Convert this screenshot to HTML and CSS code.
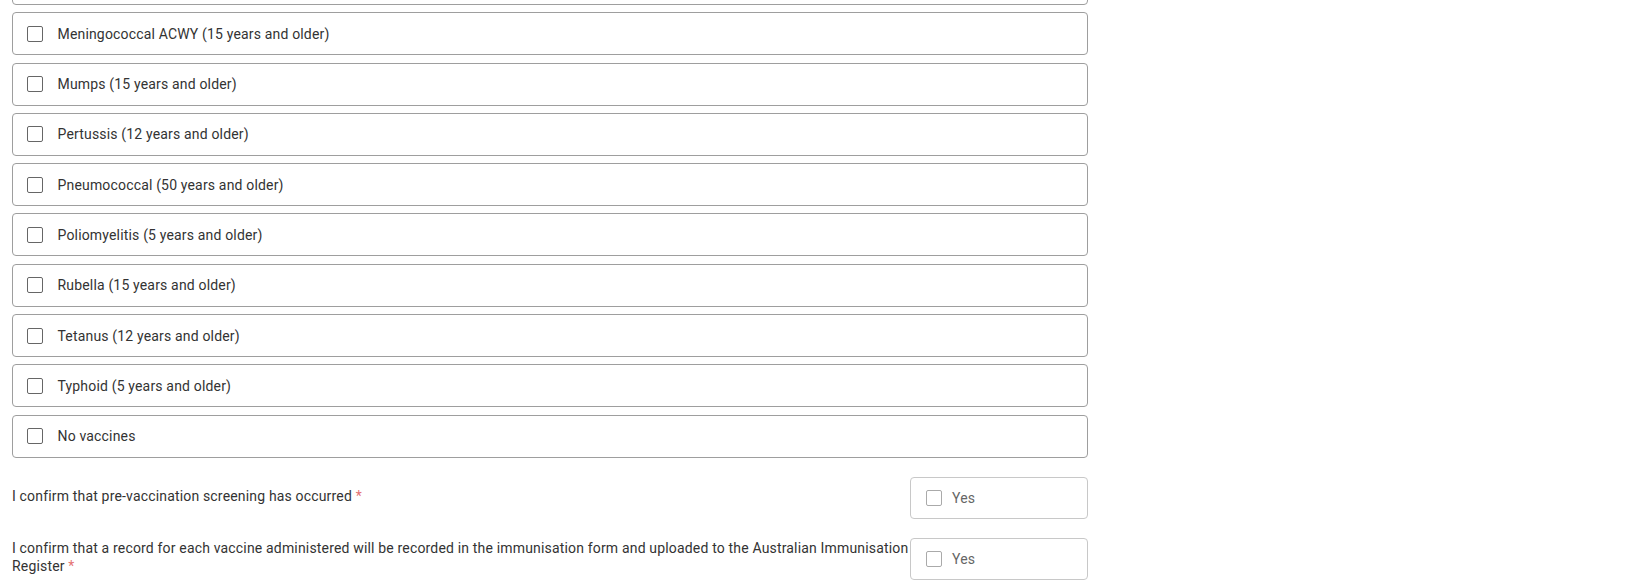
FILE: index.html
```html
<!DOCTYPE html>
<html lang="en">
<head>
    <meta charset="UTF-8">
    <title>Vaccines</title>
    <link rel="stylesheet" href="styles.css">
</head>
<body>
    <div class="form">
        <!-- vaccine options -->
        <div class="options">
            <label class="option first"><span class="box"></span>Measles (15 years and older)</label>
            <label class="option"><span class="box"></span>Meningococcal ACWY (15 years and older)</label>
            <label class="option"><span class="box"></span>Mumps (15 years and older)</label>
            <label class="option"><span class="box"></span>Pertussis (12 years and older)</label>
            <label class="option"><span class="box"></span>Pneumococcal (50 years and older)</label>
            <label class="option"><span class="box"></span>Poliomyelitis (5 years and older)</label>
            <label class="option"><span class="box"></span>Rubella (15 years and older)</label>
            <label class="option"><span class="box"></span>Tetanus (12 years and older)</label>
            <label class="option"><span class="box"></span>Typhoid (5 years and older)</label>
            <label class="option"><span class="box"></span>No vaccines</label>
        </div>

        <!-- confirmations -->
        <div class="confirm">
            <div class="confirm-label">I confirm that pre-vaccination screening has occurred <span class="req">*</span></div>
            <label class="yes"><span class="box"></span>Yes</label>
        </div>
        <div class="confirm second">
            <div class="confirm-label">I confirm that a record for each vaccine administered will be recorded in the immunisation form and uploaded to the Australian Immunisation Register <span class="req">*</span></div>
            <label class="yes"><span class="box"></span>Yes</label>
        </div>
    </div>
</body>
</html>
```

FILE: styles.css
```css
body {
    margin: 0;
    font-family: Roboto, "Liberation Sans", Arial, sans-serif;
    font-size: 14px;
    letter-spacing: 0.17px;
    color: #333;
    background: #fff;
}
.form {
    width: 1076px;
    padding: 0 12px;
}
.options {
    display: flex;
    flex-direction: column;
    gap: 7.3px;
}
.option {
    display: flex;
    align-items: center;
    box-sizing: border-box;
    height: 43px;
    border: 1px solid #9e9e9e;
    border-radius: 4px;
    padding-left: 14px;
    color: #333;
}
.option.first {
    margin-top: -38px;
}
.box {
    box-sizing: border-box;
    width: 16px;
    height: 16px;
    border: 1.5px solid #666;
    border-radius: 2px;
    margin-right: 14.5px;
    flex-shrink: 0;
}
.confirm {
    display: flex;
    align-items: center;
    margin-top: 19.5px;
}
.confirm.second {
    margin-top: 19px;
}
.confirm-label {
    flex: 1;
    line-height: 18px;
    margin-top: -5px;
    color: #333;
}
.req {
    color: #e57373;
}
.yes {
    display: flex;
    align-items: center;
    box-sizing: border-box;
    width: 178px;
    height: 42px;
    border: 1px solid #c8c8c8;
    border-radius: 4px;
    padding-left: 15px;
    color: #666;
}
.yes .box {
    border: 1px solid #aaa;
    margin-right: 10px;
}
```
